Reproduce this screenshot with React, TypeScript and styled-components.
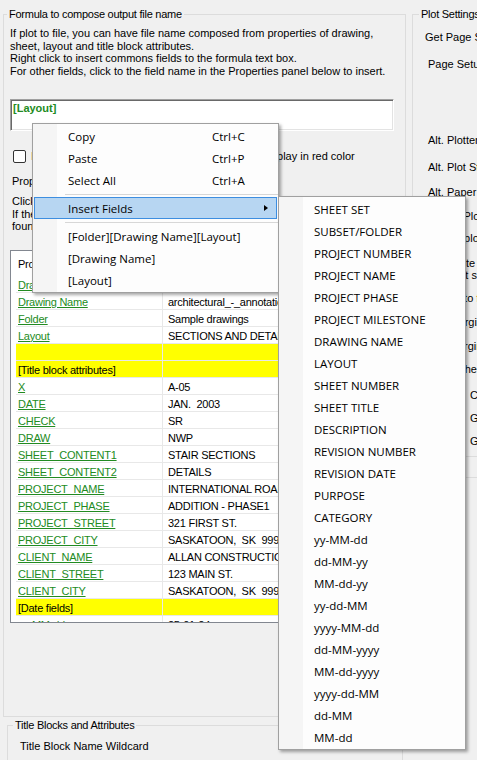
import styled, { createGlobalStyle } from "styled-components";

const GlobalStyle = createGlobalStyle`
  html, body {
    margin: 0;
    padding: 0;
    background: #f0f0f0;
  }
  body {
    font-family: "Liberation Sans", Arial, sans-serif;
    font-size: 11px;
    color: #000;
  }
  * {
    box-sizing: border-box;
  }
`;

const Screen = styled.div`
  position: relative;
  width: 477px;
  height: 760px;
  overflow: hidden;
  display: flex;
  align-items: flex-start;
`;

const LeftColumn = styled.div`
  display: flex;
  flex-direction: column;
  margin-left: 3px;
  width: 403px;
  flex-shrink: 0;
`;

const FieldGroup = styled.fieldset<{ $width: number; $height: number; $left?: number; $top?: number }>`
  margin: ${(p) => p.$top ?? 0}px 0 0 ${(p) => p.$left ?? 0}px;
  padding: 0;
  min-width: 0;
  width: ${(p) => p.$width}px;
  height: ${(p) => p.$height}px;
  border: 1px solid #dcdcdc;
  flex-shrink: 0;
`;

const Legend = styled.legend<{ $inset: number }>`
  margin-left: ${(p) => p.$inset}px;
  padding: 0 2px;
  height: 13px;
  line-height: 13px;
  letter-spacing: -0.25px;
`;

const Description = styled.p`
  margin: 6px 0 0 6px;
  line-height: 12.67px;
  white-space: nowrap;
`;

const FormulaBox = styled.div`
  margin: 21px 0 0 6px;
  width: 384px;
  height: 32px;
  padding: 2px 0 0 2px;
  background: #fff;
  border-top: 1px solid #a0a0a0;
  border-left: 1px solid #a0a0a0;
  border-right: 1px solid #fff;
  border-bottom: 1px solid #fff;
  box-shadow: inset 1px 1px 0 #696969, inset -1px -1px 0 #e3e3e3;
  color: #228b22;
  font-weight: bold;
  line-height: 13px;
`;

const CheckRow = styled.label`
  display: flex;
  align-items: center;
  gap: 5px;
  height: 13px;
  margin: 19px 0 0 9px;
  white-space: nowrap;
`;

const CheckMark = styled.span`
  width: 13px;
  height: 13px;
  flex-shrink: 0;
  border: 1px solid #333;
  border-radius: 2px;
  background: #fff;
`;

const PlainLine = styled.div<{ $top: number; $left: number }>`
  margin: ${(p) => p.$top}px 0 0 ${(p) => p.$left}px;
  line-height: 12.67px;
  white-space: nowrap;
`;

const Grid = styled.div`
  margin: 17.5px 0 0 6px;
  width: 384px;
  height: 373px;
  border: 1px solid #828790;
  background: #fff;
  overflow: hidden;
  letter-spacing: -0.25px;
`;

const GridHeader = styled.div`
  height: 25px;
  display: grid;
  grid-template-columns: 147px 1fr;
  margin-left: 5px;
  line-height: 26px;
`;

const HeaderCell = styled.span<{ $name?: boolean }>`
  padding-left: ${(p) => (p.$name ? 2 : 5)}px;
`;

const GridRow = styled.div`
  display: grid;
  grid-template-columns: 147px 1fr;
  margin-left: 5px;
  height: 17px;
`;

const Cell = styled.div<{ $section?: boolean; $name?: boolean }>`
  height: 17px;
  line-height: 15px;
  padding: 1.5px 0 0 ${(p) => (p.$name ? 2 : 5)}px;
  border-bottom: 1px solid #e8e8e8;
  border-right: ${(p) => (p.$name ? "1px solid #e8e8e8" : "none")};
  background: ${(p) => (p.$section ? "#ffff00" : "transparent")};
  white-space: pre;
  overflow: hidden;
`;

const FieldLink = styled.span`
  color: #228b22;
  text-decoration: underline;
`;

const PlotColumn = styled.div`
  margin-left: 6px;
  flex-shrink: 0;
`;

const PlotLabel = styled.div<{ $gap: number; $indent: number; $lines?: number }>`
  margin: ${(p) => p.$gap}px 0 0 ${(p) => p.$indent}px;
  line-height: ${(p) => (p.$lines ? 12 : 13)}px;
  white-space: nowrap;
`;

const OrangeText = styled.span`
  color: #e07a10;
`;

const Divider = styled.div`
  margin-top: 7.5px;
  height: 1px;
  background: #dcdcdc;
`;

const WildcardLabel = styled.div`
  margin: 8px 0 0 12px;
  line-height: 13px;
`;

/* context menu */

const MenuPanel = styled.div<{ $left: number; $top: number; $width: number }>`
  position: absolute;
  left: ${(p) => p.$left}px;
  top: ${(p) => p.$top}px;
  width: ${(p) => p.$width}px;
  padding: 1px 0;
  border: 1px solid #a0a0a0;
  background: linear-gradient(90deg, #f5f5f5 24px, #fdfdfd 24px);
  box-shadow: 2px 2px 3px rgba(0, 0, 0, 0.35);
  font-family: "Open Sans", "Liberation Sans", sans-serif;
  font-size: 11.5px;
  color: #000;
`;

const MenuItem = styled.div<{ $active?: boolean }>`
  display: grid;
  grid-template-columns: 33px 144px 1fr;
  align-items: center;
  height: 22px;
  margin: 0 1px;
  border: 1px solid ${(p) => (p.$active ? "#3d8ee0" : "transparent")};
  background: ${(p) => (p.$active ? "#b7d6f2" : "transparent")};
  white-space: nowrap;
`;

const ItemText = styled.span`
  grid-column: 2;
`;

const Shortcut = styled.span`
  grid-column: 3;
`;

const SubArrow = styled.span`
  grid-column: 3;
  justify-self: end;
  margin-right: 8px;
  width: 0;
  height: 0;
  border-left: 4px solid #000;
  border-top: 3.5px solid transparent;
  border-bottom: 3.5px solid transparent;
`;

const MenuSeparator = styled.div`
  height: 6px;
  display: flex;
  align-items: center;
  margin-left: 32px;
  &::after {
    content: "";
    flex: 1;
    height: 1px;
    background: #d7d7d7;
  }
`;

type Row = { name: string; value?: string; section?: boolean; plain?: boolean };

const rows: Row[] = [
  { name: "Drawing Path", value: "C:\\Drawings\\Sample drawings" },
  { name: "Drawing Name", value: "architectural_-_annotation_scaling_and_multileaders" },
  { name: "Folder", value: "Sample drawings" },
  { name: "Layout", value: "SECTIONS AND DETAILS" },
  { name: "", section: true },
  { name: "[Title block attributes]", section: true, plain: true },
  { name: "X", value: "A-05" },
  { name: "DATE", value: "JAN.  2003" },
  { name: "CHECK", value: "SR" },
  { name: "DRAW", value: "NWP" },
  { name: "SHEET_CONTENT1", value: "STAIR SECTIONS" },
  { name: "SHEET_CONTENT2", value: "DETAILS" },
  { name: "PROJECT_NAME", value: "INTERNATIONAL ROAD" },
  { name: "PROJECT_PHASE", value: "ADDITION - PHASE1" },
  { name: "PROJECT_STREET", value: "321 FIRST ST." },
  { name: "PROJECT_CITY", value: "SASKATOON,  SK  99999" },
  { name: "CLIENT_NAME", value: "ALLAN CONSTRUCTION" },
  { name: "CLIENT_STREET", value: "123 MAIN ST." },
  { name: "CLIENT_CITY", value: "SASKATOON,  SK  99999" },
  { name: "[Date fields]", section: true, plain: true },
  { name: "yy-MM-dd", value: "25-01-24" },
  { name: "dd-MM-yy", value: "24-01-25" },
];

const subFields = [
  "SHEET SET",
  "SUBSET/FOLDER",
  "PROJECT NUMBER",
  "PROJECT NAME",
  "PROJECT PHASE",
  "PROJECT MILESTONE",
  "DRAWING NAME",
  "LAYOUT",
  "SHEET NUMBER",
  "SHEET TITLE",
  "DESCRIPTION",
  "REVISION NUMBER",
  "REVISION DATE",
  "PURPOSE",
  "CATEGORY",
  "yy-MM-dd",
  "dd-MM-yy",
  "MM-dd-yy",
  "yy-dd-MM",
  "yyyy-MM-dd",
  "dd-MM-yyyy",
  "MM-dd-yyyy",
  "yyyy-dd-MM",
  "dd-MM",
  "MM-dd",
];

export default function App() {
  return (
    <>
      <GlobalStyle />
      <Screen>
        <LeftColumn>
          <FieldGroup $width={403} $height={709} $top={8}>
            <Legend $inset={3}>Formula to compose output file name</Legend>
            <Description>
              If plot to file, you can have file name composed from properties of drawing,
              <br />
              sheet, layout and title block attributes.
              <br />
              Right click to insert commons fields to the formula text box.
              <br />
              For other fields, click to the field name in the Properties panel below to insert.
            </Description>
            <FormulaBox>[Layout]</FormulaBox>
            <CheckRow>
              <CheckMark />
              If attribute's value is empty or field is not found, display in red color
            </CheckRow>
            <PlainLine $top={12.5} $left={8}>
              Properties of the selected drawing:
            </PlainLine>
            <PlainLine $top={7} $left={8}>
              Click on a field name to insert it into the formula.
              <br />
              If the drawing has no title block, or attributes are not
              <br />
              found, the field will be replaced with an empty text.
            </PlainLine>
            <Grid>
              <GridHeader>
                <HeaderCell $name>Property</HeaderCell>
                <HeaderCell>Value</HeaderCell>
              </GridHeader>
              {rows.map((r, i) => (
                <GridRow key={i}>
                  <Cell $name $section={r.section}>
                    {r.plain || !r.name ? r.name : <FieldLink>{r.name}</FieldLink>}
                  </Cell>
                  <Cell $section={r.section}>{r.value ?? ""}</Cell>
                </GridRow>
              ))}
            </Grid>
          </FieldGroup>
          <FieldGroup $width={396} $height={60} $left={4} $top={2}>
            <Legend $inset={5}>Title Blocks and Attributes</Legend>
            <WildcardLabel>Title Block Name Wildcard</WildcardLabel>
          </FieldGroup>
        </LeftColumn>

        <PlotColumn>
          <FieldGroup $width={160} $height={470} $top={8}>
            <Legend $inset={6}>Plot Settings</Legend>
            <PlotLabel $gap={9.5} $indent={12}>Get Page Setups from</PlotLabel>
            <PlotLabel $gap={14} $indent={15}>Page Setup</PlotLabel>
            <PlotLabel $gap={63} $indent={15}>Alt. Plotter</PlotLabel>
            <PlotLabel $gap={14} $indent={15}>Alt. Plot Style</PlotLabel>
            <PlotLabel $gap={12} $indent={15}>Alt. Paper Size</PlotLabel>
            <PlotLabel $gap={11} $indent={15}>Rotate Plot 90</PlotLabel>
            <PlotLabel $gap={9} $indent={15}>Center plot</PlotLabel>
            <PlotLabel $gap={12} $indent={15} $lines={2}>
              Overwrite existing file
              <br />
              Use first sheet only
            </PlotLabel>
            <PlotLabel $gap={11.5} $indent={15}>
              Output to <OrangeText>folder</OrangeText>
            </PlotLabel>
            <PlotLabel $gap={11} $indent={15}>Left margin</PlotLabel>
            <PlotLabel $gap={11} $indent={15}>Top margin</PlotLabel>
            <PlotLabel $gap={10} $indent={15}>Batch sheets</PlotLabel>
            <PlotLabel $gap={13} $indent={57}>Color plot</PlotLabel>
            <PlotLabel $gap={10} $indent={57}>Grayscale</PlotLabel>
            <PlotLabel $gap={10} $indent={57}>Generate log</PlotLabel>
            <Divider />
          </FieldGroup>
        </PlotColumn>

        <MenuPanel $left={32} $top={123} $width={247}>
          <MenuItem>
            <ItemText>Copy</ItemText>
            <Shortcut>Ctrl+C</Shortcut>
          </MenuItem>
          <MenuItem>
            <ItemText>Paste</ItemText>
            <Shortcut>Ctrl+P</Shortcut>
          </MenuItem>
          <MenuItem>
            <ItemText>Select All</ItemText>
            <Shortcut>Ctrl+A</Shortcut>
          </MenuItem>
          <MenuSeparator />
          <MenuItem $active>
            <ItemText>Insert Fields</ItemText>
            <SubArrow />
          </MenuItem>
          <MenuSeparator />
          <MenuItem>
            <ItemText>[Folder][Drawing Name][Layout]</ItemText>
          </MenuItem>
          <MenuItem>
            <ItemText>[Drawing Name]</ItemText>
          </MenuItem>
          <MenuItem>
            <ItemText>[Layout]</ItemText>
          </MenuItem>
        </MenuPanel>

        <MenuPanel $left={278} $top={196} $width={188}>
          {subFields.map((f) => (
            <MenuItem key={f}>
              <ItemText>{f}</ItemText>
            </MenuItem>
          ))}
        </MenuPanel>
      </Screen>
    </>
  );
}
